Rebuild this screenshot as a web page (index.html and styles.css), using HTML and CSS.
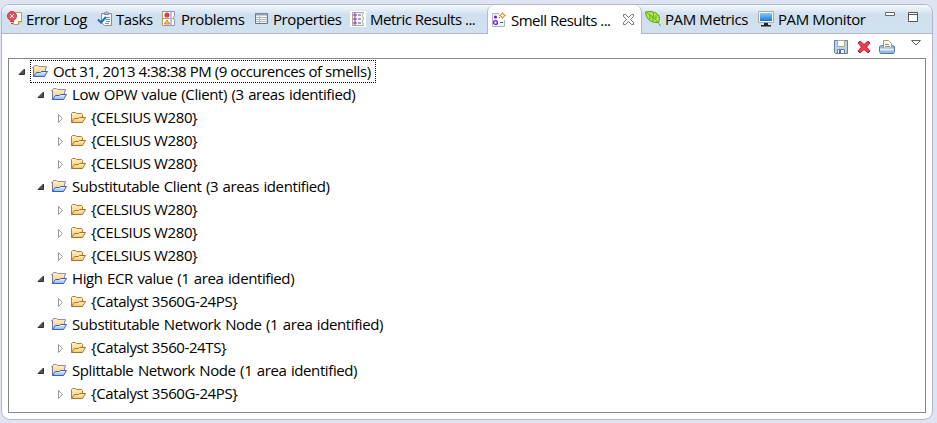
FILE: index.html
```html
<!DOCTYPE html>
<html lang="en">
<head>
<meta charset="utf-8">
<title>Smell Results</title>
<link rel="stylesheet" href="styles.css">
</head>
<body>
<svg class="defs" width="0" height="0">
  <defs>
    <linearGradient id="gold" x1="0" y1="0" x2="0" y2="1"><stop offset="0" stop-color="#fff3c8"/><stop offset="1" stop-color="#f4c568"/></linearGradient>
    <linearGradient id="sky" x1="0" y1="0" x2="0" y2="1"><stop offset="0" stop-color="#eef8ff"/><stop offset="1" stop-color="#86b9f4"/></linearGradient>
    <linearGradient id="screen" x1="0" y1="0" x2="0" y2="1"><stop offset="0" stop-color="#8bc8fa"/><stop offset="1" stop-color="#1477d4"/></linearGradient>
    <symbol id="group" viewBox="0 0 16 16">
      <path d="M1.500 12.500v-10l1-1h3l1 1h7v5" fill="url(#gold)"/>
      <path d="M1.500 12.500v-9" stroke="#6673b5"/>
      <path d="M0 3.500h1.500l1-2h3l1 1h8v1.500h-1v3.500" fill="none" stroke="#9c8ba4"/>
      <path d="M1.500 12.500l3-4h4l1-1h6l-3 5z" fill="url(#sky)" stroke="#3f5db5"/>
    </symbol>
    <symbol id="folder" viewBox="0 0 16 16">
      <path d="M1.500 12.500v-9l1-1h3l1 1h5l1 1v3" fill="url(#gold)" stroke="#b77b32"/>
      <path d="M1.500 12.500l3-4h4l1-1h6l-3 5z" fill="url(#gold)" stroke="#b0702a"/>
    </symbol>
    <symbol id="open" viewBox="0 0 8 10"><path d="M6.500 2v5.500H1z" fill="#505050" stroke="#303030"/></symbol>
    <symbol id="closed" viewBox="0 0 8 10"><path d="M2.500 1.500l4 4-4 4z" fill="#fff" stroke="#999"/></symbol>
  </defs>
</svg>
<main class="panel">
  <nav class="tabs">
    <div class="tab t-error"><svg class="icon" viewBox="0 0 16 16"><path d="M6.500 1.500h8v9l-3 3h-5z" fill="#fffdf0" stroke="#c1a052"/><path d="M11.500 13.500v-3h3" fill="#efdc98" stroke="#b48c36"/><circle cx="5" cy="5" r="4.500" fill="#e85360" stroke="#cf3345"/><path d="M3 3l4 4M7 3L3 7" stroke="#ffdce0" stroke-width="1"/><path d="M3 10.500h4M4 12.500h2" stroke="#d03545"/></svg><span>Error Log</span></div>
    <div class="tab t-tasks"><svg class="icon" viewBox="0 0 16 16"><path d="M4.500 2.500h10v12h-7l-3-3z" fill="#f4f8fd" stroke="#9a8d6c"/><path d="M7 3.500V2h1.500L9.500.5l1 1.500H12v1.500z" fill="#bfc8dc" stroke="#7485a5"/><path d="M9 6.500h4M9 8.500h4M9 10.500h4M8 12.500h4" stroke="#7590bd"/><path d="M1 8.500l3 3L9 6" fill="none" stroke="#146fc4" stroke-width="2"/></svg><span>Tasks</span></div>
    <div class="tab t-problems"><svg class="icon" viewBox="0 0 16 16"><path d="M1.500.5h12v4l-1 2 1 3v5h-12z" fill="#fff" stroke="#8794b0"/><path d="M1.500 14V1M2 7.500h10" stroke="#b99b5c"/><path d="M10 1v13" stroke="#b7c3d9" stroke-width="2"/><circle cx="6" cy="4" r="2.600" fill="#e23b48"/><path d="M6 9l2.700 4H3.300z" fill="#f6c549" stroke="#d58a20"/></svg><span>Problems</span></div>
    <div class="tab t-props"><svg class="icon" viewBox="0 0 16 16"><path d="M1.500 2.500h12v10h-12z" fill="#f5f8fb" stroke="#67768f"/><path d="M2 3.500h11" stroke="#91a0b8" stroke-width="2"/><path d="M2 6.500h11M2 8.500h11M2 10.500h11M5.500 5v7" stroke="#b3bac5"/></svg><span>Properties</span></div>
    <div class="tab t-metric"><svg class="icon" viewBox="0 0 16 16"><path d="M0 0h16v16H0z" fill="#fff"/><path d="M2.500 1.500h11l-1 3 1 3-1 3 1 4h-11z" fill="#f4f7fc" stroke="#a9a58f"/><path d="M8 4h3M8 8h3M8 12h3" stroke="#465b87"/><g fill="#e6cef9" stroke="#7b25cf"><circle cx="5" cy="4" r="1.200"/><circle cx="5" cy="8" r="1.200"/><circle cx="5" cy="12" r="1.200"/></g></svg><span>Metric Results ...</span></div>
    <div class="tab active t-smell"><svg class="icon" viewBox="0 0 16 16"><path d="M1.500 14.500V1.500h7M13.500 8v6.500H1.500" fill="#eef3fa" stroke="#a7b2c6"/><circle cx="4.500" cy="5" r="1.500" fill="#6a13cb"/><circle cx="4.500" cy="10.500" r="1.900" fill="#fff" stroke="#751ad5" stroke-width="1.400"/><path d="M8 5.500h1M9 10.500h3" stroke="#43558a"/><path d="M11.500.5l1 2 2 1-2 1-1 2-1-2-2-1 2-1z" fill="#fff4c4" stroke="#b78714"/></svg><span>Smell Results ...</span><svg class="close" viewBox="0 0 11 11"><path d="M.5.5h2l3 3 3-3h2v2l-3 3 3 3v2h-2l-3-3-3 3h-2v-2l3-3-3-3z" fill="#fff" stroke="#777"/></svg></div>
    <div class="tab t-pam"><svg class="icon" viewBox="0 0 16 16"><path d="M.5 1C7 0 12 1 14 5.500c1 3 0 5-1 6C6 12 1 8 .5 1z" fill="#b5ec4c" stroke="#4a9b10"/><path d="M2 2c5 3 9 6 13.500 13M5 4v4M8 6v4M8 2l1 4M11 4v4" fill="none" stroke="#57a51c"/></svg><span>PAM Metrics</span></div>
    <div class="tab t-monitor"><svg class="icon" viewBox="0 0 16 16"><path d="M.5.500h15v11H.5z" fill="#f7f7f5" stroke="#aaa"/><path d="M2 2h12v8H2z" fill="url(#screen)"/><path d="M6 12h4v2h3v1.500H3V14h3z" fill="#222"/></svg><span>PAM Monitor</span></div>
    <div class="window-buttons"><svg width="10" height="5"><path d="M.5.5h9v3h-9z" fill="#fff" stroke="#666"/></svg><svg width="11" height="11"><path d="M.5.5h9v9h-9zM.5 2.500h9" fill="#fff" stroke="#555"/></svg></div>
  </nav>
  <div class="toolbar">
    <svg class="icon" viewBox="0 0 16 16"><path d="M1.500 1.500h13v13h-12l-1-1z" fill="#bdd1e9" stroke="#647fa5"/><path d="M4.500 1.500h7v6h-7z" fill="#fffef0" stroke="#a9aa91"/><path d="M4.500 10.500h7v4h-7z" fill="#f3f6fa" stroke="#667da0"/><path d="M6 11h2v3H6z" fill="#536e91"/></svg>
    <svg class="icon" viewBox="0 0 16 16"><path d="M2 4l2-2 4 3.500L12 2l2 2-3.500 4 3.500 4-2 2-4-3.500L4 14l-2-2 3.500-4z" fill="#ed3c4d" stroke="#bd2636"/></svg>
    <svg class="icon" viewBox="0 0 16 16"><path d="M.5 7.500l2-1h11l2 1v5l-1 2h-13l-1-2z" fill="#9bb9df" stroke="#5476a9"/><path d="M4.500 9V1.500h5l3 3V9z" fill="#fffdec" stroke="#a49972"/><path d="M6 5.500h4M6 7.500h5" stroke="#6b91c7"/><path d="M1 10.500h14" stroke="#e1edfb" stroke-width="2"/></svg>
    <svg class="menu" width="10" height="6"><path d="M.5.5h9L5 5z" fill="#fff" stroke="#666"/></svg>
  </div>
  <section class="tree">
    <div class="row root"><svg class="arrow"><use href="#open"/></svg><div class="focus"><svg class="icon"><use href="#group"/></svg><span>Oct 31, 2013 4:38:38 PM (9 occurences of smells)</span></div></div>
    <div class="row group"><svg class="arrow"><use href="#open"/></svg><svg class="icon"><use href="#group"/></svg><span>Low OPW value (Client) (3 areas identified)</span></div>
    <div class="row leaf"><svg class="arrow"><use href="#closed"/></svg><svg class="icon"><use href="#folder"/></svg><span>{CELSIUS W280}</span></div>
    <div class="row leaf"><svg class="arrow"><use href="#closed"/></svg><svg class="icon"><use href="#folder"/></svg><span>{CELSIUS W280}</span></div>
    <div class="row leaf"><svg class="arrow"><use href="#closed"/></svg><svg class="icon"><use href="#folder"/></svg><span>{CELSIUS W280}</span></div>
    <div class="row group"><svg class="arrow"><use href="#open"/></svg><svg class="icon"><use href="#group"/></svg><span>Substitutable Client (3 areas identified)</span></div>
    <div class="row leaf"><svg class="arrow"><use href="#closed"/></svg><svg class="icon"><use href="#folder"/></svg><span>{CELSIUS W280}</span></div>
    <div class="row leaf"><svg class="arrow"><use href="#closed"/></svg><svg class="icon"><use href="#folder"/></svg><span>{CELSIUS W280}</span></div>
    <div class="row leaf"><svg class="arrow"><use href="#closed"/></svg><svg class="icon"><use href="#folder"/></svg><span>{CELSIUS W280}</span></div>
    <div class="row group"><svg class="arrow"><use href="#open"/></svg><svg class="icon"><use href="#group"/></svg><span>High ECR value (1 area identified)</span></div>
    <div class="row leaf"><svg class="arrow"><use href="#closed"/></svg><svg class="icon"><use href="#folder"/></svg><span>{Catalyst 3560G-24PS}</span></div>
    <div class="row group"><svg class="arrow"><use href="#open"/></svg><svg class="icon"><use href="#group"/></svg><span>Substitutable Network Node (1 area identified)</span></div>
    <div class="row leaf"><svg class="arrow"><use href="#closed"/></svg><svg class="icon"><use href="#folder"/></svg><span>{Catalyst 3560-24TS}</span></div>
    <div class="row group"><svg class="arrow"><use href="#open"/></svg><svg class="icon"><use href="#group"/></svg><span>Splittable Network Node (1 area identified)</span></div>
    <div class="row leaf"><svg class="arrow"><use href="#closed"/></svg><svg class="icon"><use href="#folder"/></svg><span>{Catalyst 3560G-24PS}</span></div>
  </section>
</main>
</body>
</html>
```
FILE: styles.css
```css
* { box-sizing: border-box; }
body { margin: 0; height: 423px; padding: 4px 4px 3px 1px; overflow: hidden; background: #dfe4f4; color: #000; font: 15px/22px "Open Sans", sans-serif; letter-spacing: -.4px; }
.defs { position: absolute; }
svg { display: block; flex: none; }
.panel { height: 416px; border: 1px solid #b2b7cc; border-radius: 8px 8px 9px 9px; background: #fff; overflow: hidden; }
.tabs { display: flex; height: 29px; background: linear-gradient(#f4f8fd, #cfdfed 35%, #d2e1ef); }
.tab { display: flex; align-items: center; border-bottom: 1px solid #b2b7cc; white-space: nowrap; flex: none; padding-left: 5px; }
.tab span { margin-left: 3px; }
.icon { width: 16px; height: 16px; }
.t-error { width: 90px; }
.t-tasks { width: 64px; }
.t-problems { width: 93px; padding-left: 5px; }
.t-props { width: 96px; }
.t-metric { width: 142px; letter-spacing: -.5px; }
.t-smell { width: 155px; padding-left: 3px; letter-spacing: -.5px; }
.t-pam { width: 113px; padding-left: 3px; }
.t-monitor { width: 124px; padding-left: 3px; }
.t-problems span, .t-metric span, .t-smell span, .t-pam span, .t-monitor span { margin-left: 4px; }
.t-problems .icon, .t-props .icon { margin-left: 0; }
.active { background: #fff; border: 1px solid #b2b7cc; border-width: 0 1px; border-radius: 7px 7px 0 0; }
.close { width: 11px; height: 11px; margin-left: auto; margin-right: 7px; }
.window-buttons { flex: 1; display: flex; gap: 13px; padding: 7px 0 0 6px; border-bottom: 1px solid #b2b7cc; }
.toolbar { height: 24px; display: flex; align-items: flex-start; gap: 7px; padding: 5px 11px 0 0; justify-content: flex-end; }
.menu { margin: 1px 0 0 9px; }
.tree { height: 355px; margin: 0 6px; padding: 1px 0; border: 1px solid #828790; }
.row { display: flex; align-items: center; height: 23px; white-space: nowrap; }
.row .arrow { width: 8px; height: 10px; }
.row span { margin: -2px 0 0 5px; }
.root { padding-left: 9px; letter-spacing: -.44px; }
.focus { display: flex; align-items: center; height: 23px; width: 346px; margin-left: 4px; padding-left: 1px; border: 1px dotted #000; }
.group { padding-left: 28px; word-spacing: 1px; }
.leaf { padding-left: 47px; }
.group .icon { margin-left: 6px; }
.leaf .icon { margin-left: 6px; }
```
